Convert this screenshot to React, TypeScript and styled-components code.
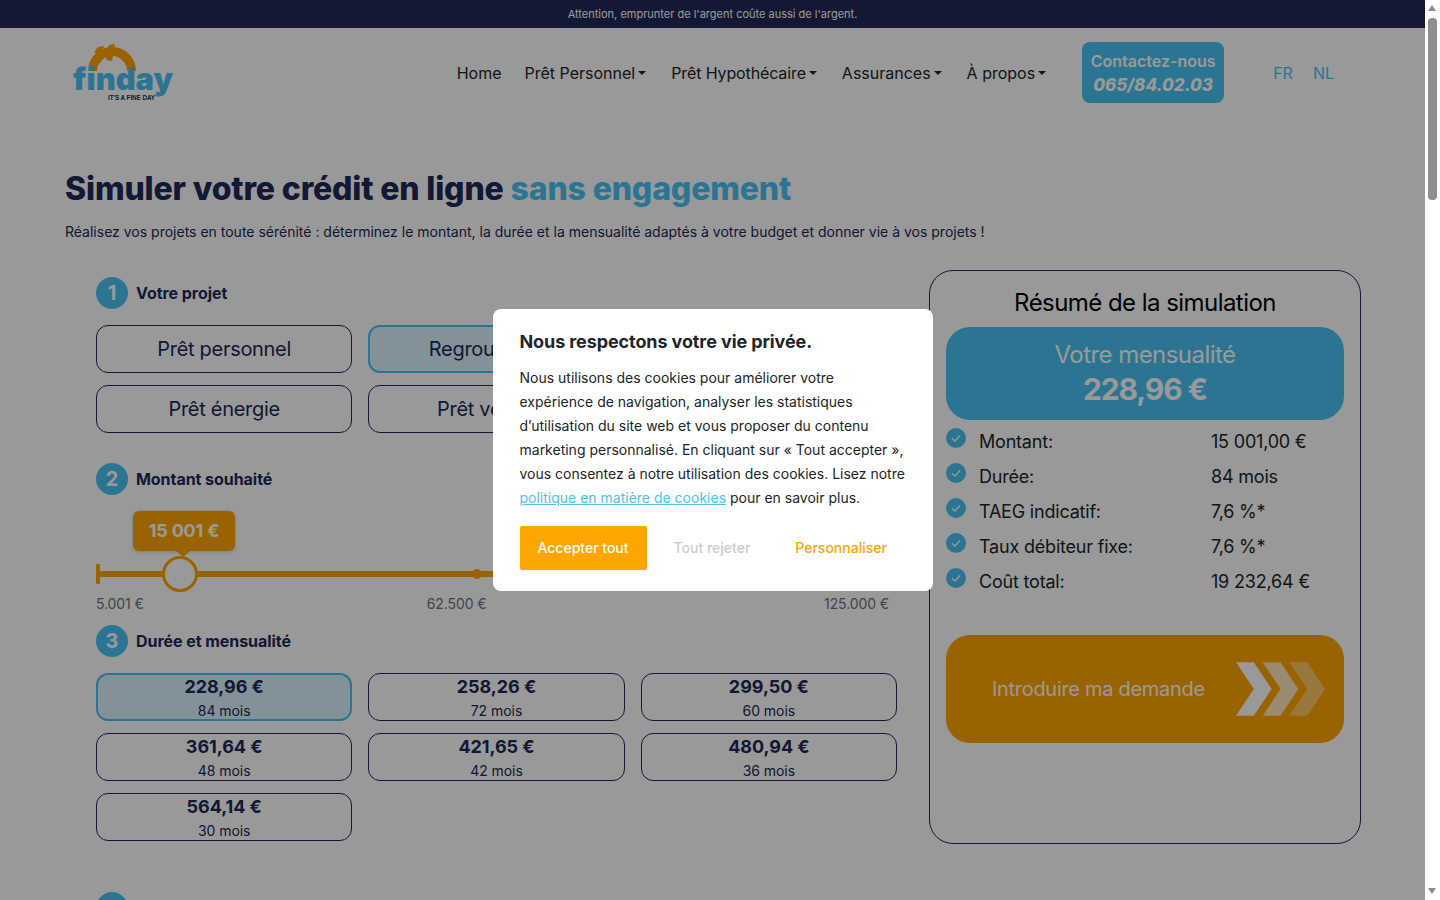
import { createGlobalStyle, styled } from "styled-components";

const NAVY = "#212857";
const BLUE = "#48c4f5";
const ORANGE = "#ffa500";

const GlobalStyle = createGlobalStyle`
  html {
    overflow: hidden;
  }
  body {
    margin: 0;
    background: #fff;
    color: ${NAVY};
    font-family: Inter, "Liberation Sans", sans-serif;
  }
  * {
    box-sizing: border-box;
  }
`;

const Page = styled.div`
  width: 1425px;
`;

const Banner = styled.div`
  height: 28px;
  background: ${NAVY};
  color: #fff;
  font-size: 11px;
  line-height: 28px;
  text-align: center;
`;

const Header = styled.header`
  display: flex;
  align-items: center;
  height: 89px;
  padding: 0 91px 0 72px;
`;

const Logo = styled.svg`
  display: block;
  width: 102px;
  height: 58px;
`;

const Nav = styled.nav`
  display: flex;
  align-items: center;
  margin-left: auto;
  color: #212529;
  font-size: 16px;
`;

const NavItem = styled.a<{ $caret?: boolean; $tight?: boolean }>`
  display: flex;
  align-items: center;
  margin-right: ${(p) => (p.$caret ? 25 : 23)}px;
  letter-spacing: ${(p) => (p.$tight ? -0.12 : 0)}px;

  ${(p) =>
    p.$caret &&
    `
    &::after {
      content: "";
      margin-left: 3px;
      border-top: 4.8px solid currentColor;
      border-left: 4.8px solid transparent;
      border-right: 4.8px solid transparent;
    }
  `}
`;

const Contact = styled.a`
  display: flex;
  flex-direction: column;
  align-items: center;
  justify-content: center;
  width: 142px;
  height: 61px;
  margin: 0 29px 0 11px;
  border-radius: 8px;
  background: ${BLUE};
  color: #fff;
  font-weight: 600;
  line-height: 24px;

  em {
    font-size: 17px;
    font-weight: 800;
  }
`;

const Lang = styled.a`
  color: ${BLUE};
  margin-left: 20px;

  &:first-of-type {
    margin-left: 0;
  }
`;

const Intro = styled.section`
  margin: 53px 0 0 65px;
`;

const Title = styled.h1`
  margin: 0;
  font-size: 32px;
  line-height: 38px;
  font-weight: 800;
  letter-spacing: -0.15px;

  span {
    color: ${BLUE};
  }
`;

const Lead = styled.p`
  margin: 13px 0 0;
  font-size: 14px;
  line-height: 22px;
`;

const Main = styled.main`
  display: grid;
  grid-template-columns: 801px 432px;
  column-gap: 32px;
  align-items: start;
  margin: 27px 0 0 96px;
`;

const Form = styled.div`
  padding-top: 7px;
`;

const Step = styled.div<{ $gap?: number }>`
  display: flex;
  align-items: center;
  gap: 8px;
  margin-top: ${(p) => p.$gap ?? 0}px;
  font-size: 16px;
  font-weight: 700;
  letter-spacing: -0.05px;
`;

const StepNumber = styled.span`
  width: 32px;
  height: 32px;
  border-radius: 50%;
  background: ${BLUE};
  color: #fff;
  font-size: 20px;
  line-height: 32px;
  text-align: center;
`;

const Choices = styled.div`
  display: grid;
  grid-template-columns: repeat(3, 1fr);
  gap: 12px 16px;
  margin-top: 16px;
`;

const Choice = styled.button<{ $active?: boolean }>`
  height: 48px;
  padding: 0;
  border: ${(p) => (p.$active ? `2px solid ${BLUE}` : `1px solid ${NAVY}`)};
  border-radius: 12px;
  background: ${(p) => (p.$active ? "rgba(72, 196, 245, 0.2)" : "transparent")};
  color: ${NAVY};
  font: inherit;
  font-size: 20px;
  letter-spacing: -0.3px;
`;

const Term = styled(Choice)`
  display: flex;
  flex-direction: column;
  align-items: center;
  overflow: hidden;
  letter-spacing: -0.05px;

  strong {
    margin-top: ${(p) => (p.$active ? -1 : 0)}px;
    font-size: 18px;
    line-height: 26px;
    font-weight: 700;
  }

  span {
    font-size: 14px;
    line-height: 22px;
  }
`;

const Track = styled.div`
  position: relative;
  width: 793px;
  height: 6px;
  margin-top: 76px;
  background: ${ORANGE};
`;

const TrackStart = styled.span`
  position: absolute;
  left: 0;
  top: -7px;
  width: 4px;
  height: 20px;
  border-radius: 1px;
  background: ${ORANGE};
`;

const TrackDot = styled.span`
  position: absolute;
  left: 376px;
  top: -2px;
  width: 10px;
  height: 10px;
  border-radius: 50%;
  background: ${ORANGE};
`;

const Thumb = styled.span`
  position: absolute;
  left: 66px;
  top: -15px;
  width: 36px;
  height: 36px;
  border: 3px solid ${ORANGE};
  border-radius: 50%;
  background: #fff;
`;

const Bubble = styled.output`
  position: absolute;
  left: 37px;
  top: -60px;
  width: 102px;
  height: 40px;
  border-radius: 6px;
  background: ${ORANGE};
  box-shadow: 0 1px 4px rgba(0, 0, 0, 0.2);
  color: #fff;
  font-size: 18px;
  font-weight: 700;
  line-height: 40px;
  letter-spacing: -0.2px;
  text-align: center;

  &::after {
    content: "";
    position: absolute;
    left: 43px;
    bottom: -6px;
    border-top: 6px solid ${ORANGE};
    border-left: 7px solid transparent;
    border-right: 7px solid transparent;
  }
`;

const Scale = styled.div`
  display: flex;
  width: 793px;
  margin-top: 16px;
  color: #6c757d;
  font-size: 14px;
  line-height: 22px;
  letter-spacing: -0.1px;

  span:nth-child(2) {
    margin-left: 283px;
  }
  span:last-child {
    margin-left: auto;
  }
`;

const Summary = styled.aside`
  height: 574px;
  padding: 17px 16px 0;
  border: 1px solid ${NAVY};
  border-radius: 24px;
`;

const SummaryTitle = styled.h2`
  margin: 0;
  color: #000;
  font-size: 24px;
  font-weight: 400;
  line-height: 29px;
  letter-spacing: -0.55px;
  text-align: center;
`;

const Monthly = styled.div`
  height: 93px;
  margin-top: 10px;
  padding-top: 13px;
  border-radius: 24px;
  background: ${BLUE};
  color: #fff;
  text-align: center;
  font-size: 24px;
  line-height: 30px;
  letter-spacing: -0.55px;

  strong {
    display: block;
    font-size: 30px;
    line-height: 38px;
    font-weight: 700;
    letter-spacing: -1.1px;
  }
`;

const Facts = styled.ul`
  margin: 4px 0 0;
  padding: 0;
  list-style: none;
`;

const Fact = styled.li`
  display: grid;
  grid-template-columns: 33px 232px 1fr;
  height: 35px;
  color: #212529;
  font-size: 18px;
  line-height: 35px;
  letter-spacing: -0.2px;
`;

const Check = styled.svg`
  display: block;
  width: 20px;
  height: 20px;
  margin-top: 4px;
`;

const Apply = styled.a`
  display: flex;
  align-items: center;
  justify-content: space-between;
  height: 108px;
  margin-top: 36px;
  padding: 0 19px 0 46px;
  border-radius: 24px;
  background: ${ORANGE};
  color: #fff;
  font-size: 20px;
  letter-spacing: -0.3px;
`;

const Chevrons = styled.svg`
  display: block;
  width: 89px;
  height: 54px;
`;

const Overlay = styled.div`
  position: fixed;
  top: 0;
  bottom: 0;
  left: 0;
  right: 15px;
  display: flex;
  align-items: center;
  justify-content: center;
  background: rgba(0, 0, 0, 0.4);
`;

const Modal = styled.div`
  width: 440px;
  height: 282px;
  padding: 20px 26px 0 27px;
  border-radius: 8px;
  background: #fff;
  color: #212529;
`;

const ModalTitle = styled.h3`
  margin: 0;
  font-size: 18px;
  font-weight: 700;
  line-height: 26px;
  letter-spacing: -0.1px;
`;

const ModalText = styled.p`
  margin: 11px 0 0;
  font-size: 14px;
  line-height: 24px;

  a {
    color: #4fc3e8;
    text-decoration: underline;
  }
`;

const ModalActions = styled.div`
  display: flex;
  align-items: center;
  margin-top: 16px;
  font-size: 14px;
  font-weight: 500;
`;

const Accept = styled.button`
  width: 127px;
  height: 44px;
  padding: 0 0 2px;
  border: 0;
  border-radius: 2px;
  background: ${ORANGE};
  color: #fff;
  font: inherit;
`;

const Ghost = styled.button<{ $muted?: boolean }>`
  padding: 0 0 2px;
  margin-left: ${(p) => (p.$muted ? 27 : 45)}px;
  border: 0;
  background: none;
  color: ${(p) => (p.$muted ? "#ccc" : ORANGE)};
  font: inherit;
`;

// the window's own scrollbar, drawn since the browser hides it
const Scrollbar = styled.div`
  position: fixed;
  top: 0;
  right: 0;
  bottom: 0;
  display: flex;
  flex-direction: column;
  align-items: center;
  width: 15px;
  background: #fff;
`;

const ScrollArrow = styled.span<{ $down?: boolean }>`
  position: absolute;
  left: 3px;
  ${(p) => (p.$down ? "bottom: 6px;" : "top: 5px;")}
  border-left: 4.5px solid transparent;
  border-right: 4.5px solid transparent;
  ${(p) => (p.$down ? "border-top: 6px solid #8c8c8c;" : "border-bottom: 6px solid #8c8c8c;")}
`;

const ScrollThumb = styled.span`
  width: 9px;
  height: 182px;
  margin-top: 18px;
  border-radius: 4px;
  background: #8f8f8f;
`;

const facts = [
  ["Montant:", "15 001,00 €"],
  ["Durée:", "84 mois"],
  ["TAEG indicatif:", "7,6 %*"],
  ["Taux débiteur fixe:", "7,6 %*"],
  ["Coût total:", "19 232,64 €"],
];

const terms = [
  ["228,96 €", "84 mois"],
  ["258,26 €", "72 mois"],
  ["299,50 €", "60 mois"],
  ["361,64 €", "48 mois"],
  ["421,65 €", "42 mois"],
  ["480,94 €", "36 mois"],
  ["564,14 €", "30 mois"],
];

const projects = ["Prêt personnel", "Regroupement", "Prêt travaux", "Prêt énergie", "Prêt véhicule", "Prêt étudiant"];

const FindayLogo = () => (
  <Logo viewBox="0 0 102 58">
    <path d="M20.5 27 A19.5 19.5 0 0 1 59.5 27" fill="none" stroke={ORANGE} strokeWidth="9" />
    <path d="M26 3 L32 2 L31 6 L36 5 L37 1 L43 0 L42 5 L47 7 L45 12 L41 11 L40 17 L34 16 L35 11 L30 12 L29 19 L23 19 L24 9 L22 8 Z" fill={ORANGE} />
    <text x="1" y="46" fontFamily="Inter" fontWeight="900" fontSize="31" textLength="100" lengthAdjust="spacingAndGlyphs" fill={BLUE}>
      finday
    </text>
    <text x="36" y="55.5" fontFamily="Liberation Sans" fontWeight="700" fontSize="7" textLength="47" lengthAdjust="spacingAndGlyphs" fill={NAVY}>
      IT'S A FINE DAY
    </text>
  </Logo>
);

const App = () => (
  <Page>
    <GlobalStyle />
    <Banner>Attention, emprunter de l'argent coûte aussi de l'argent.</Banner>
    <Header>
      <FindayLogo />
      <Nav>
        <NavItem>Home</NavItem>
        <NavItem $caret>Prêt Personnel</NavItem>
        <NavItem $caret $tight>Prêt Hypothécaire</NavItem>
        <NavItem $caret>Assurances</NavItem>
        <NavItem $caret>À propos</NavItem>
        <Contact>
          Contactez-nous
          <em>065/84.02.03</em>
        </Contact>
        <Lang>FR</Lang>
        <Lang>NL</Lang>
      </Nav>
    </Header>
    <Intro>
      <Title>
        Simuler votre crédit en ligne <span>sans engagement</span>
      </Title>
      <Lead>
        Réalisez vos projets en toute sérénité : déterminez le montant, la durée et la mensualité adaptés à votre budget et donner vie à vos projets !
      </Lead>
    </Intro>
    <Main>
      <Form>
        <Step>
          <StepNumber>1</StepNumber>
          Votre projet
        </Step>
        <Choices>
          {projects.map((name, i) => (
            <Choice key={name} $active={i === 1}>
              {name}
            </Choice>
          ))}
        </Choices>
        <Step $gap={30}>
          <StepNumber>2</StepNumber>
          Montant souhaité
        </Step>
        <Track>
          <TrackStart />
          <TrackDot />
          <Bubble>15 001 €</Bubble>
          <Thumb />
        </Track>
        <Scale>
          <span>5.001 €</span>
          <span>62.500 €</span>
          <span>125.000 €</span>
        </Scale>
        <Step $gap={10}>
          <StepNumber>3</StepNumber>
          Durée et mensualité
        </Step>
        <Choices>
          {terms.map(([amount, months], i) => (
            <Term key={months} $active={i === 0}>
              <strong>{amount}</strong>
              <span>{months}</span>
            </Term>
          ))}
        </Choices>
        <Step $gap={51}>
          <StepNumber>4</StepNumber>
          Vos coordonnées
        </Step>
      </Form>
      <Summary>
        <SummaryTitle>Résumé de la simulation</SummaryTitle>
        <Monthly>
          Votre mensualité
          <strong>228,96 €</strong>
        </Monthly>
        <Facts>
          {facts.map(([label, value]) => (
            <Fact key={label}>
              <Check viewBox="0 0 20 20">
                <circle cx="10" cy="10" r="10" fill={BLUE} />
                <path d="M6 10.5 L9 13 L14 7.5" fill="none" stroke="#fff" strokeWidth="1.3" />
              </Check>
              <span>{label}</span>
              <span>{value}</span>
            </Fact>
          ))}
        </Facts>
        <Apply>
          Introduire ma demande
          <Chevrons viewBox="0 0 90 54">
            <path d="M0 0 H18 L36 27 L18 54 H0 L18 27 Z" fill="#fff" />
            <path d="M27 0 H45 L63 27 L45 54 H27 L45 27 Z" fill="#fff" fillOpacity="0.75" />
            <path d="M54 0 H72 L90 27 L72 54 H54 L72 27 Z" fill="#fff" fillOpacity="0.4" />
          </Chevrons>
        </Apply>
      </Summary>
    </Main>
    <Overlay>
      <Modal>
        <ModalTitle>Nous respectons votre vie privée.</ModalTitle>
        <ModalText>
          Nous utilisons des cookies pour améliorer votre expérience de navigation, analyser les statistiques d’utilisation du site web et vous proposer du contenu marketing personnalisé. En cliquant sur « Tout accepter », vous consentez à notre utilisation des cookies. Lisez notre <a>politique en matière de cookies</a> pour en savoir plus.
        </ModalText>
        <ModalActions>
          <Accept>Accepter tout</Accept>
          <Ghost $muted>Tout rejeter</Ghost>
          <Ghost>Personnaliser</Ghost>
        </ModalActions>
      </Modal>
    </Overlay>
    <Scrollbar>
      <ScrollArrow />
      <ScrollThumb />
      <ScrollArrow $down />
    </Scrollbar>
  </Page>
);

export default App;
